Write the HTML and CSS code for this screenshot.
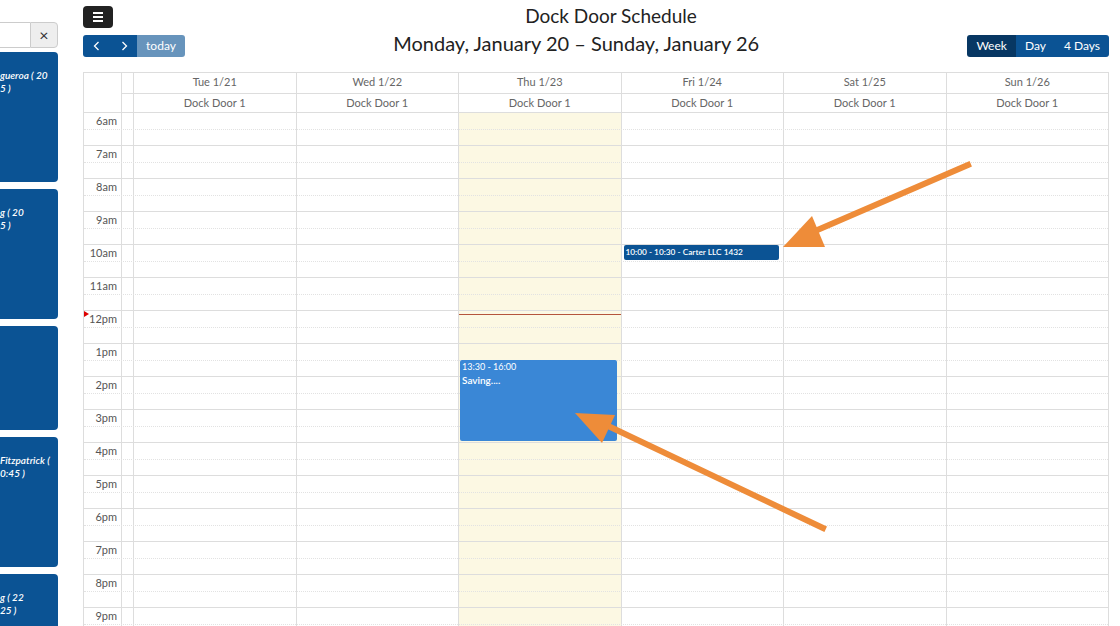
FILE: index.html
```html
<!DOCTYPE html>
<html lang="en">
<head>
    <meta charset="UTF-8">
    <title>Dock Door Schedule</title>
    <link rel="stylesheet" href="styles.css">
</head>
<body>

<!--left side: unscheduled trucks, scrolled out of view-->
<div class="sidebar">
    <div class="search">
        <input type="text" class="search-input">
        <button class="search-clear">&times;</button>
    </div>
    <div class="card card-tall">
        <div class="card-text">gueroa ( 20<br>5 )</div>
    </div>
    <div class="card card-tall">
        <div class="card-text">g ( 20<br>5 )</div>
    </div>
    <div class="card card-short"></div>
    <div class="card card-tall">
        <div class="card-text">Fitzpatrick (<br>0:45 )</div>
    </div>
    <div class="card card-tall">
        <div class="card-text">g ( 22<br>25 )</div>
    </div>
</div>

<div class="main">
    <div class="title-row">
        <button class="menu-btn">
            <span></span><span></span><span></span>
        </button>
        <h1 class="page-title">Dock Door Schedule</h1>
    </div>

    <div class="toolbar">
        <div class="btn-group nav-group">
            <button class="btn">
                <svg width="12" height="12" viewBox="0 0 12 12"><path d="M7.5 2 3.5 6l4 4" fill="none" stroke="#fff" stroke-width="1.3"/></svg>
            </button>
            <button class="btn">
                <svg width="12" height="12" viewBox="0 0 12 12"><path d="M4.5 2l4 4-4 4" fill="none" stroke="#fff" stroke-width="1.3"/></svg>
            </button>
            <button class="btn btn-disabled">today</button>
        </div>
        <h2 class="range-title">Monday, January 20 &ndash; Sunday, January 26</h2>
        <div class="btn-group">
            <button class="btn btn-active">Week</button>
            <button class="btn">Day</button>
            <button class="btn">4 Days</button>
        </div>
    </div>

    <div class="calendar">
        <!--日期和门-->
        <div class="cal-head">
            <div class="head-axis"></div>
            <div class="head-cell"></div>
            <div class="head-cell">Tue 1/21</div>
            <div class="head-cell">Wed 1/22</div>
            <div class="head-cell">Thu 1/23</div>
            <div class="head-cell">Fri 1/24</div>
            <div class="head-cell">Sat 1/25</div>
            <div class="head-cell">Sun 1/26</div>
            <div class="head-cell head-door"></div>
            <div class="head-cell head-door">Dock Door 1</div>
            <div class="head-cell head-door">Dock Door 1</div>
            <div class="head-cell head-door">Dock Door 1</div>
            <div class="head-cell head-door">Dock Door 1</div>
            <div class="head-cell head-door">Dock Door 1</div>
            <div class="head-cell head-door">Dock Door 1</div>
        </div>

        <div class="cal-body">
            <!--列背景-->
            <div class="day-col col-2"></div>
            <div class="day-col col-3"></div>
            <div class="day-col col-4"></div>
            <div class="day-col col-5 today"></div>
            <div class="day-col col-6"></div>
            <div class="day-col col-7"></div>
            <div class="day-col col-8"></div>

            <!--时间格-->
            <div class="slots">
                <div class="slot hour"><span class="slot-label">6am</span></div>
                <div class="slot"></div>
                <div class="slot hour"><span class="slot-label">7am</span></div>
                <div class="slot"></div>
                <div class="slot hour"><span class="slot-label">8am</span></div>
                <div class="slot"></div>
                <div class="slot hour"><span class="slot-label">9am</span></div>
                <div class="slot"></div>
                <div class="slot hour"><span class="slot-label">10am</span></div>
                <div class="slot"></div>
                <div class="slot hour"><span class="slot-label">11am</span></div>
                <div class="slot"></div>
                <div class="slot hour"><span class="slot-label">12pm</span></div>
                <div class="slot"></div>
                <div class="slot hour"><span class="slot-label">1pm</span></div>
                <div class="slot"></div>
                <div class="slot hour"><span class="slot-label">2pm</span></div>
                <div class="slot"></div>
                <div class="slot hour"><span class="slot-label">3pm</span></div>
                <div class="slot"></div>
                <div class="slot hour"><span class="slot-label">4pm</span></div>
                <div class="slot"></div>
                <div class="slot hour"><span class="slot-label">5pm</span></div>
                <div class="slot"></div>
                <div class="slot hour"><span class="slot-label">6pm</span></div>
                <div class="slot"></div>
                <div class="slot hour"><span class="slot-label">7pm</span></div>
                <div class="slot"></div>
                <div class="slot hour"><span class="slot-label">8pm</span></div>
                <div class="slot"></div>
                <div class="slot hour"><span class="slot-label">9pm</span></div>
                <div class="slot"></div>
            </div>

            <!--当前时间-->
            <div class="axis-layer">
                <div class="now-arrow" style="top: 199px;"></div>
            </div>

            <!--事件-->
            <div class="event-layer col-5">
                <div class="now-line" style="top: 202px;"></div>
                <div class="event event-new" style="top: 248px; height: 81px;">
                    <div class="event-time">13:30 - 16:00</div>
                    <div class="event-title">Saving....</div>
                </div>
            </div>
            <div class="event-layer col-6">
                <div class="event event-booked" style="top: 133px; height: 15px;">
                    10:00 - 10:30 - Carter LLC 1432
                </div>
            </div>
        </div>
    </div>
</div>

<!--标注箭头-->
<svg class="annotations" width="1120" height="626" viewBox="0 0 1120 626">
    <line x1="968" y1="165" x2="808" y2="234" stroke="#ee8c39" stroke-width="6" stroke-linecap="square"/>
    <polygon points="783,247 812,216 825,247" fill="#ee8c39"/>
    <line x1="823" y1="528" x2="604" y2="424" stroke="#ee8c39" stroke-width="6" stroke-linecap="square"/>
    <polygon points="575,413 615,415 602,443" fill="#ee8c39"/>
</svg>

</body>
</html>
```

FILE: styles.css
```css
* {
margin: 0;
padding: 0;
box-sizing: border-box;
}

body {
display: flex;
height: 626px;
overflow: hidden;
position: relative;
font-family: Lato, "Noto Sans", sans-serif;
color: #333;
background-color: #fff;
}

button {
font-family: inherit;
border: none;
cursor: pointer;
}

/*侧栏只露出右边一截*/
.sidebar {
width: 58px;
flex: none;
overflow: hidden;
padding-top: 22px;
}

.search {
display: flex;
height: 26px;
margin-bottom: 4px;
}

.search-input {
width: 30px;
height: 26px;
border: 1px solid #ccc;
border-left: none;
border-right: none;
outline: none;
}

.search-clear {
width: 28px;
height: 26px;
background-color: #eee;
border: 1px solid #ccc;
border-radius: 0 4px 4px 0;
font-size: 16px;
color: #333;
line-height: 22px;
}

.card {
background-color: #0b5394;
border-radius: 0 4px 4px 0;
margin-bottom: 7px;
padding-top: 17px;
color: #fff;
}

.card-tall {
height: 130px;
}

.card-short {
height: 104px;
}

.card-text {
font-size: 10px;
font-style: italic;
font-weight: 600;
line-height: 13px;
white-space: nowrap;
}

/*右侧主区*/
.main {
flex: 1;
margin-left: 25px;
margin-right: 11px;
min-width: 0;
}

.title-row {
display: flex;
align-items: flex-start;
height: 35px;
padding-top: 6px;
}

.menu-btn {
width: 30px;
height: 22px;
background-color: #222;
border-radius: 4px;
display: flex;
flex-direction: column;
justify-content: center;
align-items: center;
gap: 2px;
}

.menu-btn span {
display: block;
width: 10px;
height: 2px;
background-color: #fff;
}

.page-title {
flex: 1;
text-align: center;
font-size: 19px;
font-weight: 400;
line-height: 20px;
color: #222;
}

.toolbar {
display: flex;
justify-content: space-between;
align-items: center;
height: 22px;
margin-bottom: 15px;
}

.range-title {
font-size: 20px;
font-weight: 400;
color: #222;
line-height: 22px;
margin-bottom: 6px;
}

.btn-group {
display: flex;
}

.btn {
height: 22px;
padding: 0 9px 2px;
background-color: #0b5394;
color: #fff;
font-size: 12px;
display: flex;
align-items: center;
justify-content: center;
}

.btn-group .btn:first-child {
border-radius: 3px 0 0 3px;
}

.btn-group .btn:last-child {
border-radius: 0 3px 3px 0;
}

.btn svg {
display: block;
}

.nav-group .btn {
width: 27px;
padding: 0 0 1px;
}

.nav-group .btn-disabled {
width: 48px;
padding-bottom: 2px;
opacity: 0.62;
}

.btn-active {
background-color: #073763;
}

/*日历表格*/
.calendar {
border: 1px solid #ddd;
border-bottom: none;
}

.cal-head,
.cal-body {
display: grid;
grid-template-columns: 37px 12px repeat(6, 1fr);
}

.cal-head {
grid-template-rows: 20px 19px;
font-size: 11px;
color: #666;
}

.head-axis {
grid-row: 1 / 3;
}

.head-cell {
border-left: 1px solid #ddd;
text-align: center;
line-height: 18px;
white-space: nowrap;
overflow: hidden;
}

.head-door {
border-top: 1px solid #ddd;
line-height: 18px;
}

.day-col {
grid-row: 1;
border-left: 1px solid #ddd;
}

.col-2 { grid-column: 2; }
.col-3 { grid-column: 3; }
.col-4 { grid-column: 4; }
.col-5 { grid-column: 5; }
.col-6 { grid-column: 6; }
.col-7 { grid-column: 7; }
.col-8 { grid-column: 8; }

.today {
background-color: #fcf8e3;
}

.slots {
grid-row: 1;
grid-column: 1 / -1;
}

.slot {
height: 16px;
border-top: 1px dotted #e2e2e2;
}

.slot.hour {
height: 17px;
border-top: 1px solid #ddd;
}

.slot-label {
display: block;
width: 37px;
padding-right: 4px;
text-align: right;
font-size: 11px;
line-height: 16px;
color: #555;
}

.axis-layer,
.event-layer {
grid-row: 1;
position: relative;
}

.axis-layer {
grid-column: 1;
}

.now-arrow {
position: absolute;
left: 0;
width: 0;
height: 0;
border-top: 3px solid transparent;
border-bottom: 3px solid transparent;
border-left: 5px solid #d00;
}

.now-line {
position: absolute;
left: 1px;
right: 0;
height: 1px;
background-color: #b5543c;
}

.event {
position: absolute;
border-radius: 2px;
color: #fff;
overflow: hidden;
}

.event-booked {
left: 3px;
right: 4px;
background-color: #0b5394;
font-size: 8.3px;
font-weight: 600;
line-height: 15px;
padding-left: 2px;
white-space: nowrap;
}

.event-new {
left: 2px;
right: 4px;
background-color: #3a87d6;
padding: 1px 2px;
font-size: 9px;
}

.event-new .event-time {
line-height: 11px;
}

.event-title {
margin-top: 2px;
font-size: 10px;
font-weight: 600;
line-height: 12px;
}

/*标注层*/
.annotations {
position: absolute;
top: 0;
left: 0;
pointer-events: none;
}
```
